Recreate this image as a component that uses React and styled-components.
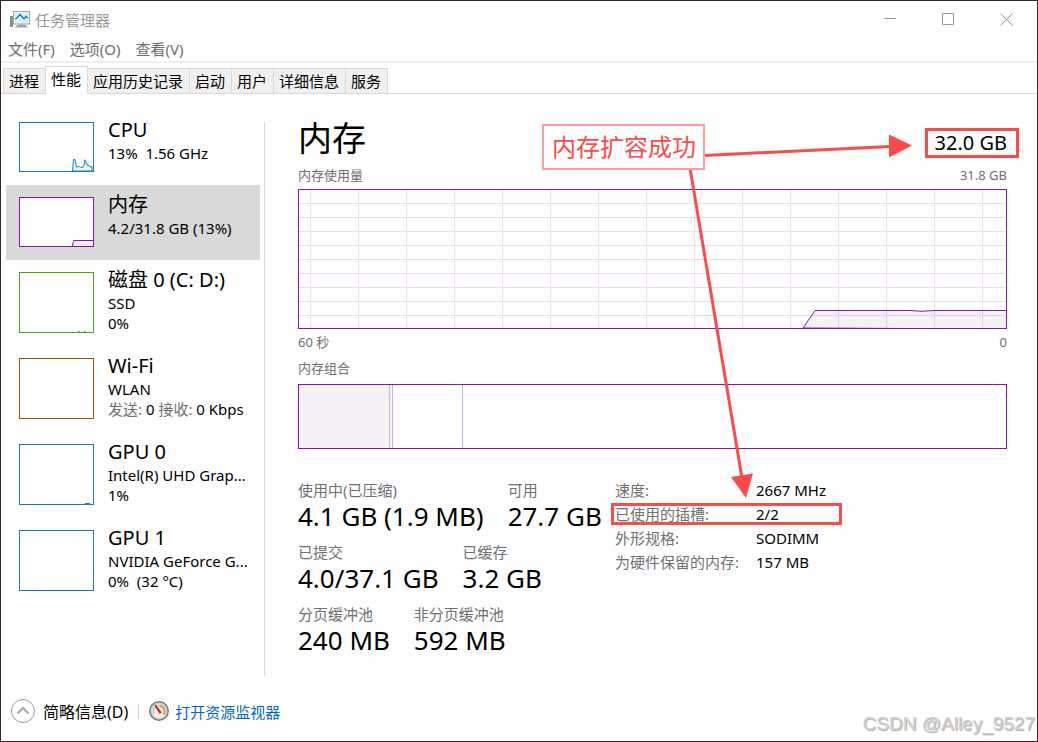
import styled, { createGlobalStyle } from "styled-components";

const PURPLE = "#8b12ae";
const BLUE = "#117dbb";

const devices = [
  { name: "CPU", lines: ["13%  1.56 GHz"], color: BLUE, graph: "cpu" },
  { name: "内存", lines: ["4.2/31.8 GB (13%)"], color: PURPLE, graph: "memory", active: true },
  { name: "磁盘 0 (C: D:)", lines: ["SSD", "0%"], color: "#4da60c", graph: "disk" },
  { name: "Wi-Fi", lines: ["WLAN"], network: true, color: "#a74f01" },
  { name: "GPU 0", lines: ["Intel(R) UHD Grap...", "1%"], color: BLUE, graph: "gpu" },
  { name: "GPU 1", lines: ["NVIDIA GeForce G...", "0%  (32 °C)"], color: BLUE },
];

const tabs = ["进程", "性能", "应用历史记录", "启动", "用户", "详细信息", "服务"];

const stats = [
  [
    { label: "使用中(已压缩)", value: "4.1 GB (1.9 MB)" },
    { label: "可用", value: "27.7 GB" },
  ],
  [
    { label: "已提交", value: "4.0/37.1 GB" },
    { label: "已缓存", value: "3.2 GB" },
  ],
  [
    { label: "分页缓冲池", value: "240 MB" },
    { label: "非分页缓冲池", value: "592 MB" },
  ],
];

const details = [
  { label: "速度:", value: "2667 MHz" },
  { label: "已使用的插槽:", value: "2/2", marked: true },
  { label: "外形规格:", value: "SODIMM" },
  { label: "为硬件保留的内存:", value: "157 MB" },
];

const segments = [
  { name: "in-use", share: 12.9, filled: true },
  { name: "modified", share: 0.4, filled: true },
  { name: "standby", share: 9.9 },
];

const AppIcon = () => (
  <svg width="20" height="17" viewBox="0 0 20 17" aria-hidden="true">
    <rect x="0" y="5" width="3" height="11" fill="#8c8c8c" />
    <rect x="1" y="6" width="2" height="2" fill="#35d02c" />
    <path d="M8 13.500h7l3 3H5z" fill="#a4a4a4" />
    <rect x="3.500" y="0.500" width="16" height="12.500" fill="#f2f2f2" stroke="#a6a6a6" />
    <rect x="5" y="2" width="13" height="9.500" fill="#d3effb" />
    <path d="M5 8l2-1 3-3.500 4 4.500 2-2.500 2 1.500" fill="none" stroke="#167cb8" strokeWidth="1.300" />
  </svg>
);

const GaugeIcon = () => (
  <svg width="20" height="20" viewBox="0 0 20 20" aria-hidden="true">
    <circle cx="10" cy="10" r="9.200" fill="#e4e4e0" stroke="#777" strokeWidth="1.500" />
    <circle cx="10" cy="10" r="7.300" fill="#f7f6f0" stroke="#c4c4c0" />
    <path d="M5 12.500A5.500 5.500 0 0 1 10 4.500" fill="none" stroke="#b9bdb8" strokeWidth="1.200" />
    <path d="M10.500 4.800A5.400 5.400 0 0 1 14.500 13.500" fill="none" stroke="#ef8a48" strokeWidth="1.800" />
    <path d="M5.200 4.200l1.800-.4 5.600 7.700-1.700 1.500z" fill="#d3161c" />
  </svg>
);

const Thumb = ({ type, color }) => (
  <ThumbBox $color={color} $tall={type !== "cpu" && type !== "memory"}>
    {type === "cpu" && (
      <svg width="73" height="48" viewBox="0 0 73 48">
        <path
          d="M52.500 48L53.500 36.500h1.500l1.500 7.500 2-.5 2 .8h2.500l1-1.500 1-6 1.500 3 1 2.500 1.500 0 1 1.700 2-.3V48z"
          fill="#f1f6fa"
          stroke={color}
        />
      </svg>
    )}
    {type === "memory" && (
      <svg width="73" height="48" viewBox="0 0 73 48">
        <path d="M52.500 48l1-5.500H74V48" fill="#f4f2f4" stroke={color} />
      </svg>
    )}
    {type === "disk" && (
      <svg width="73" height="59" viewBox="0 0 73 59">
        <path d="M58 58.500h1.500M64 58.500h1.500" stroke={color} />
      </svg>
    )}
    {type === "gpu" && (
      <svg width="73" height="59" viewBox="0 0 73 59">
        <path d="M65 58.500h5" stroke={color} />
      </svg>
    )}
  </ThumbBox>
);

const UsageChart = () => (
  <ChartBox>
    <svg width="100%" height="138" viewBox="0 0 707 138" preserveAspectRatio="none">
      {Array.from({ length: 15 }, (_, i) => (
        <path key={`v${i}`} d={`M${11.5 + i * 48} 0v138`} stroke="#ecdcf1" />
      ))}
      {Array.from({ length: 9 }, (_, i) => (
        <path key={`h${i}`} d={`M0 ${13.5 + i * 14}h706`} stroke="#ecdcf1" />
      ))}
      <path
        d="M504 138l12-17.500h95q12 1.500 24 0h74V139z"
        fill="#3a1a44"
        fillOpacity="0.06"
        stroke={PURPLE}
      />
    </svg>
  </ChartBox>
);

const App = () => {
  return (
    <>
      <GlobalStyle />
      <Window>
        <TitleBar>
          <AppIcon />
          <Title>任务管理器</Title>
          <CaptionButton aria-label="最小化">
            <svg width="13" height="13">
              <path d="M0 5.500h12" />
            </svg>
          </CaptionButton>
          <CaptionButton aria-label="最大化">
            <svg width="13" height="13">
              <path d="M0.500 0.500h11v11h-11z" />
            </svg>
          </CaptionButton>
          <CaptionButton aria-label="关闭">
            <svg width="13" height="13">
              <path d="M0.500 0.500l12 12M12.500 0.500l-12 12" />
            </svg>
          </CaptionButton>
        </TitleBar>
        <MenuBar>
          <MenuItem>文件(F)</MenuItem>
          <MenuItem>选项(O)</MenuItem>
          <MenuItem>查看(V)</MenuItem>
        </MenuBar>
        <TabBar role="tablist">
          {tabs.map((tab) => (
            <Tab key={tab} role="tab" aria-selected={tab === "性能"} $active={tab === "性能"}>
              {tab}
            </Tab>
          ))}
        </TabBar>

        <Body>
          <Sidebar>
            {devices.map((device) => (
              <Device key={device.name} $active={device.active}>
                <Thumb type={device.graph} color={device.color} />
                <DeviceText>
                  <DeviceName>{device.name}</DeviceName>
                  {device.lines.map((line) => (
                    <DeviceLine key={line}>{line}</DeviceLine>
                  ))}
                  {device.network && (
                    <DeviceLine>
                      <Muted>发送:</Muted> 0 <Muted>接收:</Muted> 0 Kbps
                    </DeviceLine>
                  )}
                </DeviceText>
              </Device>
            ))}
          </Sidebar>
          <Divider />
          <Main>
            <Header>
              <Heading>内存</Heading>
              <Capacity>32.0 GB</Capacity>
            </Header>
            <Caption $top={8}>
              <span>内存使用量</span>
              <span>31.8 GB</span>
            </Caption>
            <UsageChart />
            <Caption $top={4}>
              <span>60 秒</span>
              <span>0</span>
            </Caption>
            <Caption $top={8}>
              <span>内存组合</span>
            </Caption>
            <Composition>
              {segments.map((segment) => (
                <Segment key={segment.name} $filled={segment.filled} style={{ width: `${segment.share}%` }} />
              ))}
            </Composition>
            <Info>
              <Stats>
                {stats.map((row) => (
                  <StatRow key={row[0].label}>
                    {row.map((stat) => (
                      <div key={stat.label}>
                        <StatLabel>{stat.label}</StatLabel>
                        <StatValue>{stat.value}</StatValue>
                      </div>
                    ))}
                  </StatRow>
                ))}
              </Stats>
              <Details>
                {details.map((detail) => (
                  <DetailRow key={detail.label} $marked={detail.marked}>
                    <dt>{detail.label}</dt>
                    <dd>{detail.value}</dd>
                  </DetailRow>
                ))}
              </Details>
            </Info>
          </Main>
        </Body>

        <Footer>
          <FooterButton>
            <svg width="24" height="24" viewBox="0 0 24 24" fill="none" aria-hidden="true">
              <circle cx="12" cy="12" r="11.500" stroke="#999" />
              <path d="M6.500 14.500L12 9l5.500 5.500" stroke="#a6a6a6" strokeWidth="2" />
            </svg>
            简略信息(D)
          </FooterButton>
          <FooterLine />
          <FooterLink href="#resmon">
            <GaugeIcon />
            打开资源监视器
          </FooterLink>
        </Footer>

        <Arrows aria-hidden="true">
          <path d="M704 155.500L890 146.500M690 168l52 310" stroke="#ff4a4a" strokeWidth="3" />
          <path d="M889 134.500l23 11-23 12zM731 477l22-3.500-7 24.500z" fill="#ff4a4a" />
        </Arrows>
        <Callout>内存扩容成功</Callout>
        <Watermark>CSDN @Alley_9527</Watermark>
      </Window>
    </>
  );
};

const GlobalStyle = createGlobalStyle`
  * {
    box-sizing: border-box;
  }
  body {
    margin: 0;
    background: #fff;
    color: #000;
    font-family: "Noto Sans", "Noto Sans CJK SC", sans-serif;
    font-size: 15px;
  }
  button {
    padding: 0;
    border: none;
    background: none;
    color: inherit;
    font: inherit;
    text-align: left;
  }
  svg {
    display: block;
    flex: none;
  }
`;

const Window = styled.div`
  position: relative;
  display: flex;
  flex-direction: column;
  min-height: 100vh;
  border: 1px solid #30272b;
`;

const TitleBar = styled.header`
  display: flex;
  align-items: center;
  height: 36px;
  padding: 0 2px 0 9px;
`;

const Title = styled.span`
  flex: 1;
  margin-left: 5px;
  color: #999;
`;

const CaptionButton = styled.button`
  display: flex;
  align-items: center;
  justify-content: center;
  width: 58px;
  height: 36px;
  path {
    fill: none;
    stroke: #999;
  }
`;

const MenuBar = styled.nav`
  display: flex;
  gap: 15px;
  height: 26px;
  padding-left: 7px;
  border-bottom: 2px solid #f0f0f0;
`;

const MenuItem = styled.button`
  color: #6d6d6d;
  line-height: 24px;
`;

const TabBar = styled.div`
  display: flex;
  align-items: flex-end;
  height: 31px;
  padding-left: 2px;
  border-bottom: 1px solid #d9d9d9;
`;

const Tab = styled.button`
  height: ${(props) => (props.$active ? 28 : 26)}px;
  margin-bottom: -1px;
  margin-left: ${(props) => (props.$active ? 0 : -1)}px;
  padding: 0 6px ${(props) => (props.$active ? 3 : 0)}px 5px;
  border: 1px solid #d9d9d9;
  border-bottom-color: ${(props) => (props.$active ? "#fff" : "#d9d9d9")};
  background: ${(props) => (props.$active ? "#fff" : "#f0f0f0")};
  line-height: 22px;
  &:first-child {
    margin-left: 0;
    border-right: none;
  }
`;

const Body = styled.div`
  display: flex;
  flex: 1;
`;

const Sidebar = styled.aside`
  width: 263px;
  padding: 16px 4px 0 5px;
`;

const Device = styled.button`
  display: flex;
  gap: 14px;
  width: 100%;
  padding: 0 0 12px 13px;
  background: ${(props) => (props.$active ? "#d9d9d9" : "transparent")};
`;

const ThumbBox = styled.span`
  flex: none;
  width: 75px;
  height: ${(props) => (props.$tall ? 61 : 50)}px;
  margin: 12px 0 1px;
  border: 1px solid ${(props) => props.$color};
  background: #fff;
  overflow: hidden;
`;

const DeviceText = styled.span`
  display: block;
  height: 62px;
  padding-top: 7px;
  white-space: pre;
`;

const DeviceName = styled.span`
  display: block;
  font-size: 20px;
  line-height: 26px;
`;

const DeviceLine = styled.span`
  display: block;
  line-height: 20px;
`;

const Muted = styled.span`
  color: #707070;
`;

const Divider = styled.div`
  width: 1px;
  margin: 28px 0 5px;
  background: #d9d9d9;
`;

const Main = styled.main`
  flex: 1;
  padding: 28px 30px 0 33px;
`;

const Header = styled.div`
  display: flex;
  align-items: flex-end;
  justify-content: space-between;
`;

const Heading = styled.h1`
  margin: 0;
  padding-bottom: 4px;
  font-size: 34px;
  font-weight: 400;
  line-height: 32px;
`;

const Capacity = styled.span`
  position: relative;
  font-size: 20px;
  line-height: 30px;
  &::after {
    content: "";
    position: absolute;
    inset: 0 -12px 0 -10px;
    border: 3px solid #ff4a4a;
  }
`;

const Caption = styled.div`
  display: flex;
  justify-content: space-between;
  margin-top: ${(props) => props.$top}px;
  color: #707070;
  font-size: 13px;
  line-height: 18px;
`;

const ChartBox = styled.div`
  margin-top: 5px;
  border: 1px solid ${PURPLE};
`;

const Composition = styled.div`
  display: flex;
  height: 65px;
  margin-top: 7px;
  border: 1px solid ${PURPLE};
`;

const Segment = styled.div`
  border-right: 1px solid #cdb0d8;
  background: ${(props) => (props.$filled ? "#f4f2f4" : "#fff")};
`;

const Info = styled.div`
  display: grid;
  grid-template-columns: 317px 1fr;
  margin-top: 29px;
`;

const Stats = styled.div`
  display: flex;
  flex-direction: column;
  gap: 8px;
  padding-top: 2px;
`;

const StatRow = styled.div`
  display: flex;
  gap: 24px;
  white-space: nowrap;
`;

const StatLabel = styled.div`
  color: #707070;
  line-height: 20px;
`;

const StatValue = styled.div`
  height: 34px;
  font-size: 26px;
  line-height: 32px;
`;

const Details = styled.dl`
  width: 222px;
  margin: 0;
`;

const DetailRow = styled.div`
  position: relative;
  display: grid;
  grid-template-columns: 141px 1fr;
  line-height: 24px;
  dt {
    color: #707070;
  }
  dd {
    margin: 0;
  }
  &::after {
    content: ${(props) => (props.$marked ? '""' : "none")};
    position: absolute;
    inset: 1px -5px 1px -4px;
    border: 3px solid #ff4a4a;
  }
`;

const Footer = styled.footer`
  display: flex;
  align-items: center;
  height: 60px;
  padding-left: 10px;
`;

const FooterButton = styled.button`
  display: flex;
  align-items: center;
  gap: 8px;
  font-size: 16px;
`;

const FooterLine = styled.span`
  width: 1px;
  height: 15px;
  margin: 0 10px;
  background: #d0d0d0;
`;

const FooterLink = styled.a`
  display: flex;
  align-items: center;
  gap: 6px;
  color: #0066cc;
  text-decoration: none;
`;

const Arrows = styled.svg`
  position: absolute;
  top: -1px;
  left: -1px;
  width: 100%;
  height: 100%;
  pointer-events: none;
`;

const Callout = styled.div`
  position: absolute;
  top: 123px;
  left: 541px;
  padding: 0 7px 0 8px;
  border: 2px solid #ff9c9c;
  background: #fff;
  color: #ff4a4a;
  font-size: 24px;
  line-height: 42px;
`;

const Watermark = styled.div`
  position: absolute;
  right: 2px;
  bottom: 4px;
  color: #d0d0d0;
  font-family: "Liberation Sans", sans-serif;
  font-size: 19px;
  line-height: 26px;
  text-shadow: 1px 1px 1px #a8a8a8;
`;

export default App;
